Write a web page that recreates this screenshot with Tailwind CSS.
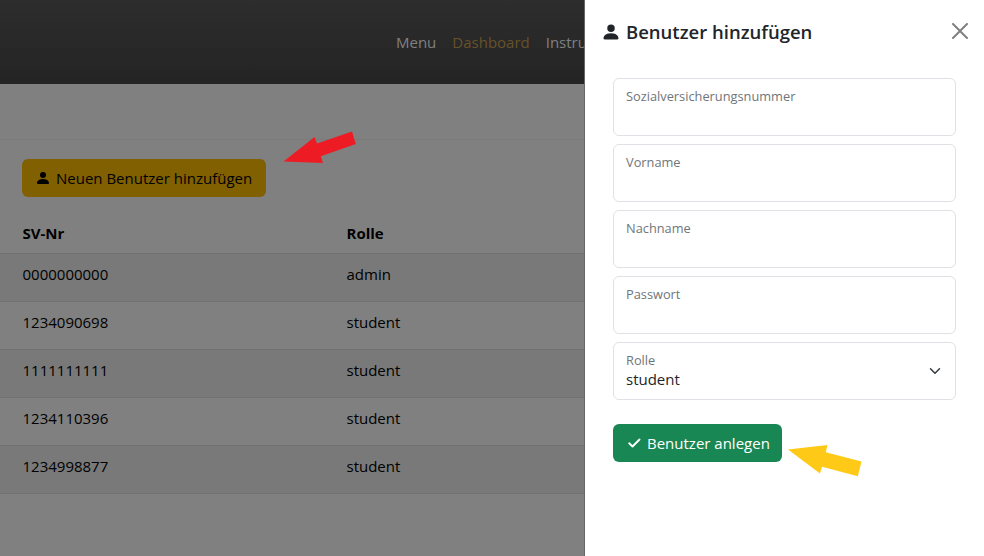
<!DOCTYPE html>
<html lang="de">
<head>
<meta charset="utf-8">
<title>Benutzer hinzufügen</title>
<script src="https://cdn.jsdelivr.net/npm/@tailwindcss/browser@4"></script>
</head>
<body class="relative flex h-[556px] w-[984px] overflow-hidden bg-white font-['Open_Sans','Noto_Sans',sans-serif] text-[15px] leading-6 text-black">
  <main class="flex w-[585px] shrink-0 flex-col overflow-hidden border-r border-[#666666] bg-[#808080] whitespace-nowrap">
    <nav class="flex h-[84px] shrink-0 items-center gap-4 bg-linear-to-b from-[#2d2d2e] to-[#242425] pl-[396px] text-[#808080]">
      <a>Menu</a><a class="text-[#665229]">Dashboard</a><a>Instru</a>
    </nav>
    <div class="h-14 shrink-0 border-b border-[#7a7a7a]"></div>
    <div class="px-[22px] pt-[19px]">
      <button class="flex h-[38px] w-[244px] items-center rounded-md bg-[#806000] pl-[13px]">
        <svg class="mr-[5px] size-4" viewBox="0 0 16 16" fill="currentColor"><path d="M3 14s-1 0-1-1 1-4 6-4 6 3 6 4-1 1-1 1zm5-6a3 3 0 1 0 0-6 3 3 0 0 0 0 6"/></svg>
        <span>Neuen Benutzer hinzufügen</span>
      </button>
    </div>
    <table class="mt-4 w-full table-fixed text-left">
      <colgroup><col class="w-[324px]"><col></colgroup>
      <thead><tr class="h-10 border-b border-[#717171]"><th class="pl-[22.5px]">SV-Nr</th><th class="pl-[22.5px]">Rolle</th></tr></thead>
      <tbody>
        <tr class="h-12 border-b border-[#717171] bg-[#797979]"><td class="pb-[6px] pl-[22.5px]">0000000000</td><td class="pb-[6px] pl-[22.5px]">admin</td></tr>
        <tr class="h-12 border-b border-[#717171]"><td class="pb-[6px] pl-[22.5px]">1234090698</td><td class="pb-[6px] pl-[22.5px]">student</td></tr>
        <tr class="h-12 border-b border-[#717171] bg-[#797979]"><td class="pb-[6px] pl-[22.5px]">1111111111</td><td class="pb-[6px] pl-[22.5px]">student</td></tr>
        <tr class="h-12 border-b border-[#717171]"><td class="pb-[6px] pl-[22.5px]">1234110396</td><td class="pb-[6px] pl-[22.5px]">student</td></tr>
        <tr class="h-12 border-b border-[#717171] bg-[#797979]"><td class="pb-[6px] pl-[22.5px]">1234998877</td><td class="pb-[6px] pl-[22.5px]">student</td></tr>
      </tbody>
    </table>
  </main>
  <aside class="flex grow flex-col text-[#212529]">
    <header class="flex h-16 items-center pr-4 pl-4">
      <svg class="mr-[5px] size-5" viewBox="0 0 16 16" fill="currentColor"><path d="M3 14s-1 0-1-1 1-4 6-4 6 3 6 4-1 1-1 1zm5-6a3 3 0 1 0 0-6 3 3 0 0 0 0 6"/></svg>
      <h5 class="grow text-[18.5px] font-semibold">Benutzer hinzufügen</h5>
      <svg class="mb-0.5 size-4" viewBox="0 0 16 16" fill="#808080"><path d="M.293.293a1 1 0 0 1 1.414 0L8 6.586 14.293.293a1 1 0 1 1 1.414 1.414L9.414 8l6.293 6.293a1 1 0 0 1-1.414 1.414L8 9.414l-6.293 6.293a1 1 0 0 1-1.414-1.414L6.586 8 .293 1.707a1 1 0 0 1 0-1.414"/></svg>
    </header>
    <form class="mt-[14px] ml-7 flex w-[343px] flex-col gap-2">
      <div class="h-[58px] rounded-md border border-[#dee2e6] px-3 pt-[7px] text-[12.8px] leading-5 text-[#70757a]">Sozialversicherungsnummer</div>
      <div class="h-[58px] rounded-md border border-[#dee2e6] px-3 pt-[7px] text-[12.8px] leading-5 text-[#70757a]">Vorname</div>
      <div class="h-[58px] rounded-md border border-[#dee2e6] px-3 pt-[7px] text-[12.8px] leading-5 text-[#70757a]">Nachname</div>
      <div class="h-[58px] rounded-md border border-[#dee2e6] px-3 pt-[7px] text-[12.8px] leading-5 text-[#70757a]">Passwort</div>
      <div class="flex h-[58px] items-center justify-between rounded-md border border-[#dee2e6] px-3">
        <div class="flex flex-col self-start pt-[7px]">
          <span class="text-[12.8px] leading-5 text-[#70757a]">Rolle</span>
          <span class="leading-[18px]">student</span>
        </div>
        <svg class="h-3 w-4" viewBox="0 0 16 16" fill="none" stroke="#343a40" stroke-width="2" stroke-linecap="round" stroke-linejoin="round"><path d="m2 5 6 6 6-6"/></svg>
      </div>
      <button type="button" class="mt-4 flex h-[38px] w-[169px] items-center rounded-md bg-[#198754] pl-[13px] whitespace-nowrap text-white">
        <svg class="mr-[5px] size-4" viewBox="0 0 16 16" fill="none" stroke="currentColor" stroke-width="1.9" stroke-linecap="round" stroke-linejoin="round"><path d="m3.200 8.300 3.300 3.200 7-7"/></svg>
        <span>Benutzer anlegen</span>
      </button>
    </form>
  </aside>
  <svg class="absolute top-[130px] left-[282px] h-[34px] w-[76px]" viewBox="282 130 76 34" fill="#ed1c24"><path d="m283.500 161.500 31-24.500 2.500 6.500 35-12 3.800 12.500-35 12.200 2.200 6.800z"/></svg>
  <svg class="absolute top-[443px] left-[786px] h-[35px] w-[78px]" viewBox="786 443 78 35" fill="#ffc918"><path d="m788 449.500 39.500-4.500-1.700 7.300 35.700 9.200-3.700 14.700-35.800-9.400-2 6.700z"/></svg>
</body>
</html>
